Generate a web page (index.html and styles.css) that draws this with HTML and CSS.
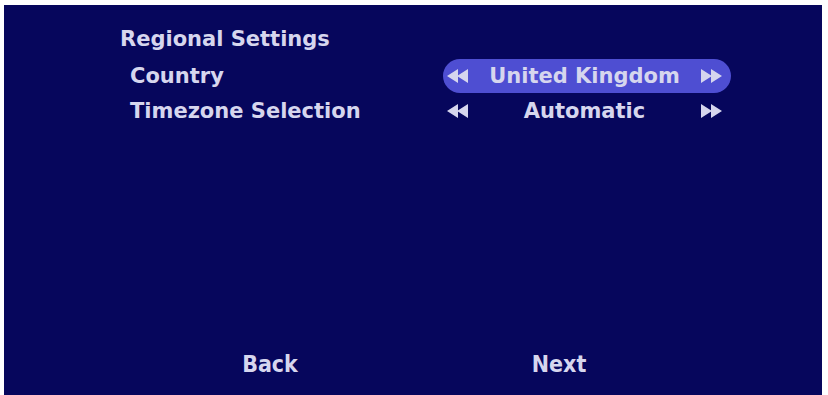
FILE: index.html
```html
<!DOCTYPE html>
<html>
<head>
<meta charset="utf-8">
<link rel="stylesheet" href="styles.css">
</head>
<body>
<div class="screen">
  <div class="content">
    <div class="title">Regional Settings</div>
    <div class="row">
      <div class="label">Country</div>
      <div class="selector active">
        <svg class="arrow" viewBox="0 0 22 16"><path d="M0 8 L11 1 V15 Z M10 8 L21 1 V15 Z"/></svg>
        <span class="value">United Kingdom</span>
        <svg class="arrow" viewBox="0 0 22 16"><path d="M22 8 L11 1 V15 Z M12 8 L1 1 V15 Z"/></svg>
      </div>
    </div>
    <div class="row">
      <div class="label">Timezone Selection</div>
      <div class="selector">
        <svg class="arrow" viewBox="0 0 22 16"><path d="M0 8 L11 1 V15 Z M10 8 L21 1 V15 Z"/></svg>
        <span class="value">Automatic</span>
        <svg class="arrow" viewBox="0 0 22 16"><path d="M22 8 L11 1 V15 Z M12 8 L1 1 V15 Z"/></svg>
      </div>
    </div>
  </div>
  <div class="footer">
    <div class="btn back">Back</div>
    <div class="btn next">Next</div>
  </div>
</div>
</body>
</html>
```
FILE: styles.css
```css
html, body {
  margin: 0;
  padding: 0;
  background: #ffffff;
}
body {
  width: 828px;
  height: 395px;
  overflow: hidden;
  font-family: "DejaVu Sans", sans-serif;
  font-weight: bold;
  color: #d6d6ee;
}
.screen {
  margin: 5px 6px 0 4px;
  height: 390px;
  background: #06065c;
  display: flex;
  flex-direction: column;
  justify-content: space-between;
}
.content {
  padding: 17px 0 0 116px;
}
.title {
  font-size: 21px;
  height: 35px;
  line-height: 35px;
}
.row {
  display: flex;
  align-items: center;
  height: 37px;
}
.row + .row {
  height: 33px;
}
.label {
  width: 313px;
  padding-left: 10px;
  font-size: 21px;
}
.selector {
  width: 288px;
  height: 34px;
  border-radius: 17px;
  display: flex;
  align-items: center;
  justify-content: space-between;
  padding: 0 9px 0 4px;
  box-sizing: border-box;
  font-size: 21px;
}
.selector.active {
  background: #4e4ed2;
}
.arrow {
  width: 22px;
  height: 16px;
  fill: #d6d6ee;
}
.footer {
  display: flex;
  height: 52px;
  box-sizing: border-box;
  padding-top: 8px;
  align-items: flex-start;
  font-family: "DejaVu Sans", sans-serif;
  font-stretch: condensed;
  font-size: 23px;
  line-height: 26px;
}
.btn {
  text-align: center;
  width: 110px;
}
.back {
  margin-left: 211px;
}
.next {
  margin-left: 179px;
}
```
